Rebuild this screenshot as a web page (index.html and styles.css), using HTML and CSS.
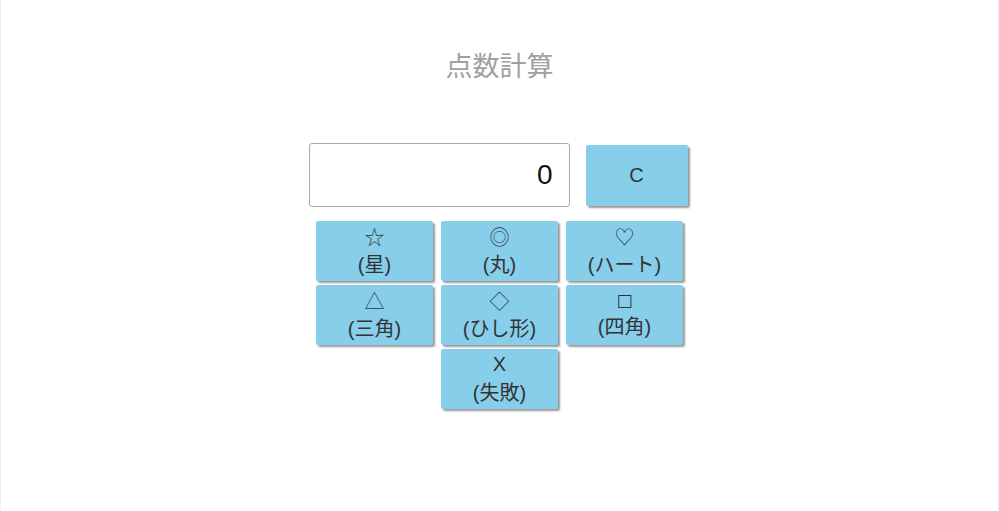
FILE: index.html
```html
<!DOCTYPE html>
<html lang="ja">
<head>
<meta charset="utf-8">
<title>点数計算</title>
<link rel="stylesheet" href="styles.css">
</head>
<body>
<div class="page">
  <h1 class="title">点数計算</h1>
  <div class="calc">
    <div class="top-row">
      <div class="display">0</div>
      <button class="btn btn-clear">C</button>
    </div>
    <div class="pad">
      <button class="btn key"><span class="sym">☆</span><span>(星)</span></button>
      <button class="btn key"><span class="sym">◎</span><span>(丸)</span></button>
      <button class="btn key"><span class="sym">♡</span><span>(ハート)</span></button>
      <button class="btn key"><span class="sym">△</span><span>(三角)</span></button>
      <button class="btn key"><span class="sym">◇</span><span>(ひし形)</span></button>
      <button class="btn key"><span class="sym sym-small">□</span><span>(四角)</span></button>
      <button class="btn key key-x"><span class="sym sym-latin">X</span><span>(失敗)</span></button>
    </div>
  </div>
</div>
</body>
</html>
```

FILE: styles.css
```css
html, body {
  margin: 0;
  padding: 0;
  background: #fff;
}
body {
  font-family: "Liberation Sans", "Noto Sans CJK JP", sans-serif;
}
.page {
  width: 999px;
  height: 511px;
  box-sizing: border-box;
  border-left: 1px solid #f0f0f0;
  border-right: 1px solid #f0f0f0;
  display: flex;
  flex-direction: column;
  align-items: center;
}
.title {
  margin: 50px 0 0;
  font-size: 27px;
  font-weight: normal;
  line-height: 34px;
  color: #a0a0a0;
}
.calc {
  margin-top: 59px;
  display: flex;
  flex-direction: column;
  align-items: center;
}
.top-row {
  display: flex;
  align-items: flex-start;
  gap: 16px;
  margin-left: -3px;
}
.display {
  width: 261px;
  height: 64px;
  box-sizing: border-box;
  border: 1px solid #aaa;
  border-radius: 3px;
  font-size: 28px;
  line-height: 62px;
  text-align: right;
  padding-right: 16px;
  color: #111;
}
.btn {
  border: none;
  margin: 0;
  padding: 0;
  background: #87ceeb;
  border-radius: 2px;
  box-shadow: 2px 2px 2px #9a9a9a;
  color: #333;
  font-family: "Liberation Sans", "Noto Sans CJK JP", sans-serif;
  font-size: 20px;
}
.btn-clear {
  width: 102px;
  height: 61px;
  margin-top: 2px;
}
.pad {
  margin-top: 14px;
  display: grid;
  grid-template-columns: repeat(3, 117px);
  grid-auto-rows: 60px;
  column-gap: 8px;
  row-gap: 4px;
}
.key {
  display: flex;
  flex-direction: column;
  align-items: center;
  justify-content: center;
  line-height: 29px;
}
.sym {
  font-family: "Noto Sans CJK JP", sans-serif;
  font-weight: 300;
}
.sym-small {
  font-family: "DejaVu Sans", sans-serif;
  font-weight: normal;
  font-size: 17px;
  line-height: 25px;
}
.key-x {
  grid-column: 2;
}
.sym-latin {
  font-family: "Liberation Sans", sans-serif;
  font-weight: normal;
}
```
